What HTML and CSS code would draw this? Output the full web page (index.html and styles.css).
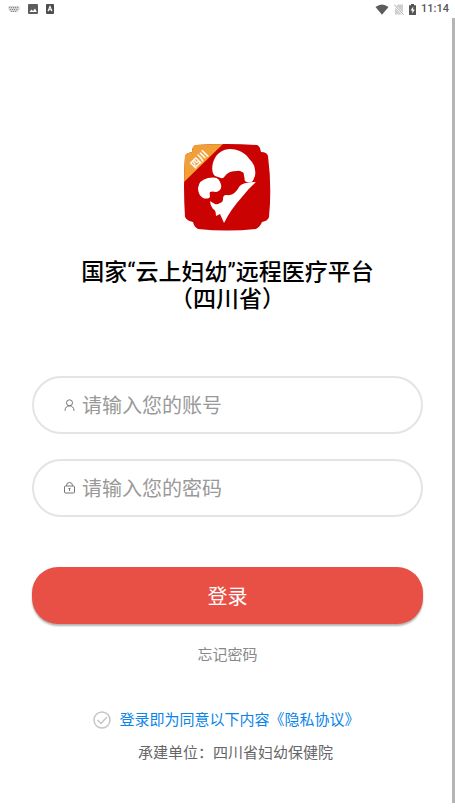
FILE: index.html
```html
<!DOCTYPE html>
<html lang="zh-CN">
<head>
    <meta charset="UTF-8">
    <meta name="viewport" content="width=device-width, initial-scale=1.0">
    <title>登录</title>
    <link rel="stylesheet" href="styles.css">
</head>
<body>
    <!-- Status bar -->
    <div class="status-bar">
        <div class="status-left">
            <svg width="12" height="8" viewBox="0 0 12 8">
                <path d="M0.5 1h11v3.5L9.5 7h-7L0.5 4.500z" fill="#d4d4d4"/>
                <path d="M1 2.500h10M2 4.500h8M3 6.500h6" stroke="#888" stroke-dasharray="1 1"/>
            </svg>
            <svg width="10" height="10" viewBox="0 0 10 10">
                <rect width="10" height="10" rx="1" fill="#5c5c5c"/>
                <path d="M1.500 8l2-2.500 1.500 1.500 2-2.500L8.800 8z" fill="#fff"/>
            </svg>
            <svg width="8" height="10" viewBox="0 0 8 10">
                <rect width="8" height="10" rx="1" fill="#4c4c4c"/>
                <path d="M2 7.300L4 2.500l2 4.800M2.800 5.800h2.400" fill="none" stroke="#fff" stroke-width="1.100"/>
            </svg>
        </div>
        <div class="status-right">
            <svg width="14" height="11" viewBox="0 0 14 11">
                <path d="M0.500 3Q7-2 13.500 3L7 10.800z" fill="#5c5c5c"/>
            </svg>
            <svg width="10" height="11" viewBox="0 0 10 11">
                <path d="M1 3l3-2.500h5v10H1z" fill="#cfcfcf"/>
                <path d="M0 1l9.500 9.500" stroke="#fff" stroke-width="2"/>
                <path d="M0 0.500l9.500 10" stroke="#aaa"/>
            </svg>
            <svg width="7" height="11" viewBox="0 0 7 11">
                <path d="M0 1.200h2V0h3v1.200h2V11H0z" fill="#555"/>
                <path d="M4.300 2.500L1.500 6.500h1.800v3l2.500-4H4z" fill="#fff"/>
            </svg>
            <span class="clock">11:14</span>
        </div>
    </div>
    <div class="scrollbar"></div>

    <main class="login">
        <svg class="logo" viewBox="0 0 87 87" role="img" aria-label="四川">
            <defs>
                <clipPath id="badge">
                    <path d="M12 1Q43-1 73 1Q76 2 77 8Q83 8 84 12Q88 43 85 73Q84 77 78 78Q76 83 72 85Q43 88 14 85Q10 83 9 78Q3 77 1 73Q-1 43 1 12Q2 9 8 8Q8 2 12 1z"/>
                </clipPath>
            </defs>
            <g clip-path="url(#badge)">
                <rect width="87" height="87" fill="#cb0202"/>
                <path d="M0 0h39L0 38z" fill="#f0a037"/>
            </g>
            <path d="M31 32C27 29 28 20 30 16C33 9 39 5 46 5C53 5 59 8 63 12Q66 16 68 18Q71 22 71 26Q72 31 70 34Q69 38 67 38Q63 39 61 37C60 35 61 34 60 32Q60 28 58 28Q55 26 53 27Q49 27 46 28Q42 30 41 32Q39 35 37 34z" fill="#fff"/>
            <path d="M24 34C29 33 33 33 35 36Q38 41 37 44Q36 47 32 48Q28 47 26 48C25 50 27 53 25 54Q22 55 19 54Q14 51 14 44Q15 36 24 34z" fill="#fff"/>
            <path d="M26 57Q29 59 31 60Q33 61 36 59Q39 58 39 55Q39 51 42 51C49 52 52 48 55 43Q58 38 72 38Q65 44 58 53Q47 65 40 79L36 70L32 72Q32 66 29 65Q26 61 26 57z" fill="#fff"/>
            <text class="logo-text" x="15" y="19" transform="rotate(-45 15 15)">四川</text>
        </svg>

        <h1 class="title">国家<span class="quote">“</span>云上妇幼<span class="quote">”</span>远程医疗平台<br>（四川省）</h1>

        <form class="login-form">
            <div class="field">
                <label for="account" aria-label="账号">
                    <svg width="11" height="12" viewBox="0 0 11 12" fill="none" stroke="#666" stroke-width="0.900">
                        <circle cx="5.500" cy="3.800" r="3"/>
                        <path d="M1 11.800C1 8.500 3 6.800 5.500 6.800S10 8.500 10 11.800"/>
                    </svg>
                </label>
                <input type="text" id="account" name="account" placeholder="请输入您的账号">
            </div>
            <div class="field">
                <label for="password" aria-label="密码">
                    <svg width="11" height="12" viewBox="0 0 11 12" fill="none" stroke="#666" stroke-width="0.900">
                        <rect x="0.500" y="4" width="10" height="7" rx="1"/>
                        <path d="M2.500 4V3.500a3 3 0 0 1 6 0V4M4.500 6.500h2M5.500 6.500v2.500"/>
                    </svg>
                </label>
                <input type="password" id="password" name="password" placeholder="请输入您的密码">
            </div>
            <button type="submit" class="submit">登录</button>
            <a class="forgot" href="#">忘记密码</a>
            <div class="agreement">
                <input type="checkbox" id="agree" name="agree">
                <svg class="check" width="18" height="18" viewBox="0 0 18 18" fill="none" stroke="#c5c5c5" stroke-width="1.500">
                    <circle cx="9" cy="9" r="8"/>
                    <path d="M4.500 9l3.500 3.500L14 6"/>
                </svg>
                <label for="agree">登录即为同意以下内容<a href="#">《隐私协议》</a></label>
            </div>
        </form>
        <p class="company">承建单位：四川省妇幼保健院</p>
    </main>
</body>
</html>
```

FILE: styles.css
```css
* { box-sizing: border-box; }
body { margin: 0; background: #fff; font-family: Roboto, "Noto Sans CJK SC", sans-serif; font-size: 15px; line-height: 20px; }
a { color: inherit; text-decoration: none; }
svg { display: block; }

.status-bar { display: flex; justify-content: space-between; align-items: center; height: 18px; padding: 0 6px 0 8px; }
.status-left { display: flex; align-items: center; gap: 8px; }
.status-right { display: flex; align-items: center; gap: 5px; }
.clock { color: #555; font-size: 11px; font-weight: 500; line-height: 18px; }
.scrollbar { position: absolute; top: 18px; right: 0; bottom: 5px; width: 3px; background: #b5b5b5; }

.login { display: flex; flex-direction: column; align-items: center; padding: 126px 32px 0; }
.logo { width: 87px; height: 87px; }
.logo-text { fill: #fff; font-size: 10px; font-weight: 700; text-anchor: middle; }
.title { margin: 28px 0 63px; font-size: 23px; font-weight: 500; line-height: 27px; text-align: center; color: #000; }
.quote { font-weight: 400; }

.login-form { display: flex; flex-direction: column; align-items: center; width: 100%; }
.field { display: flex; align-items: center; gap: 7px; width: 100%; height: 58px; margin-bottom: 25px; padding: 0 30px; border: 2px solid #e4e4e4; border-radius: 29px; }
.field input { flex: 1; min-width: 0; padding: 2px 0 0; border: none; outline: none; background: none; color: #333; font-family: inherit; font-size: 20px; line-height: 30px; }
.field input::placeholder { color: #999; opacity: 1; }
.submit { width: 100%; height: 57px; margin-top: 25px; padding: 0; border: none; border-radius: 26px; background: #e85046; box-shadow: 0 2px 2px rgba(0, 0, 0, 0.3); color: #fff; font-family: inherit; font-size: 20px; }
.forgot { margin-top: 21px; color: #888; }
.agreement { display: grid; grid-template-columns: 18px auto; align-items: center; column-gap: 8px; margin-top: 45px; padding-right: 2px; color: #0a84e8; }
.agreement input { grid-area: 1 / 1; width: 18px; height: 18px; margin: 0; appearance: none; }
.check { grid-area: 1 / 1; pointer-events: none; }
.agreement input:checked + .check { stroke: #0a84e8; }
.company { margin: 13px 0 0; padding-left: 16px; color: #666; }
```
